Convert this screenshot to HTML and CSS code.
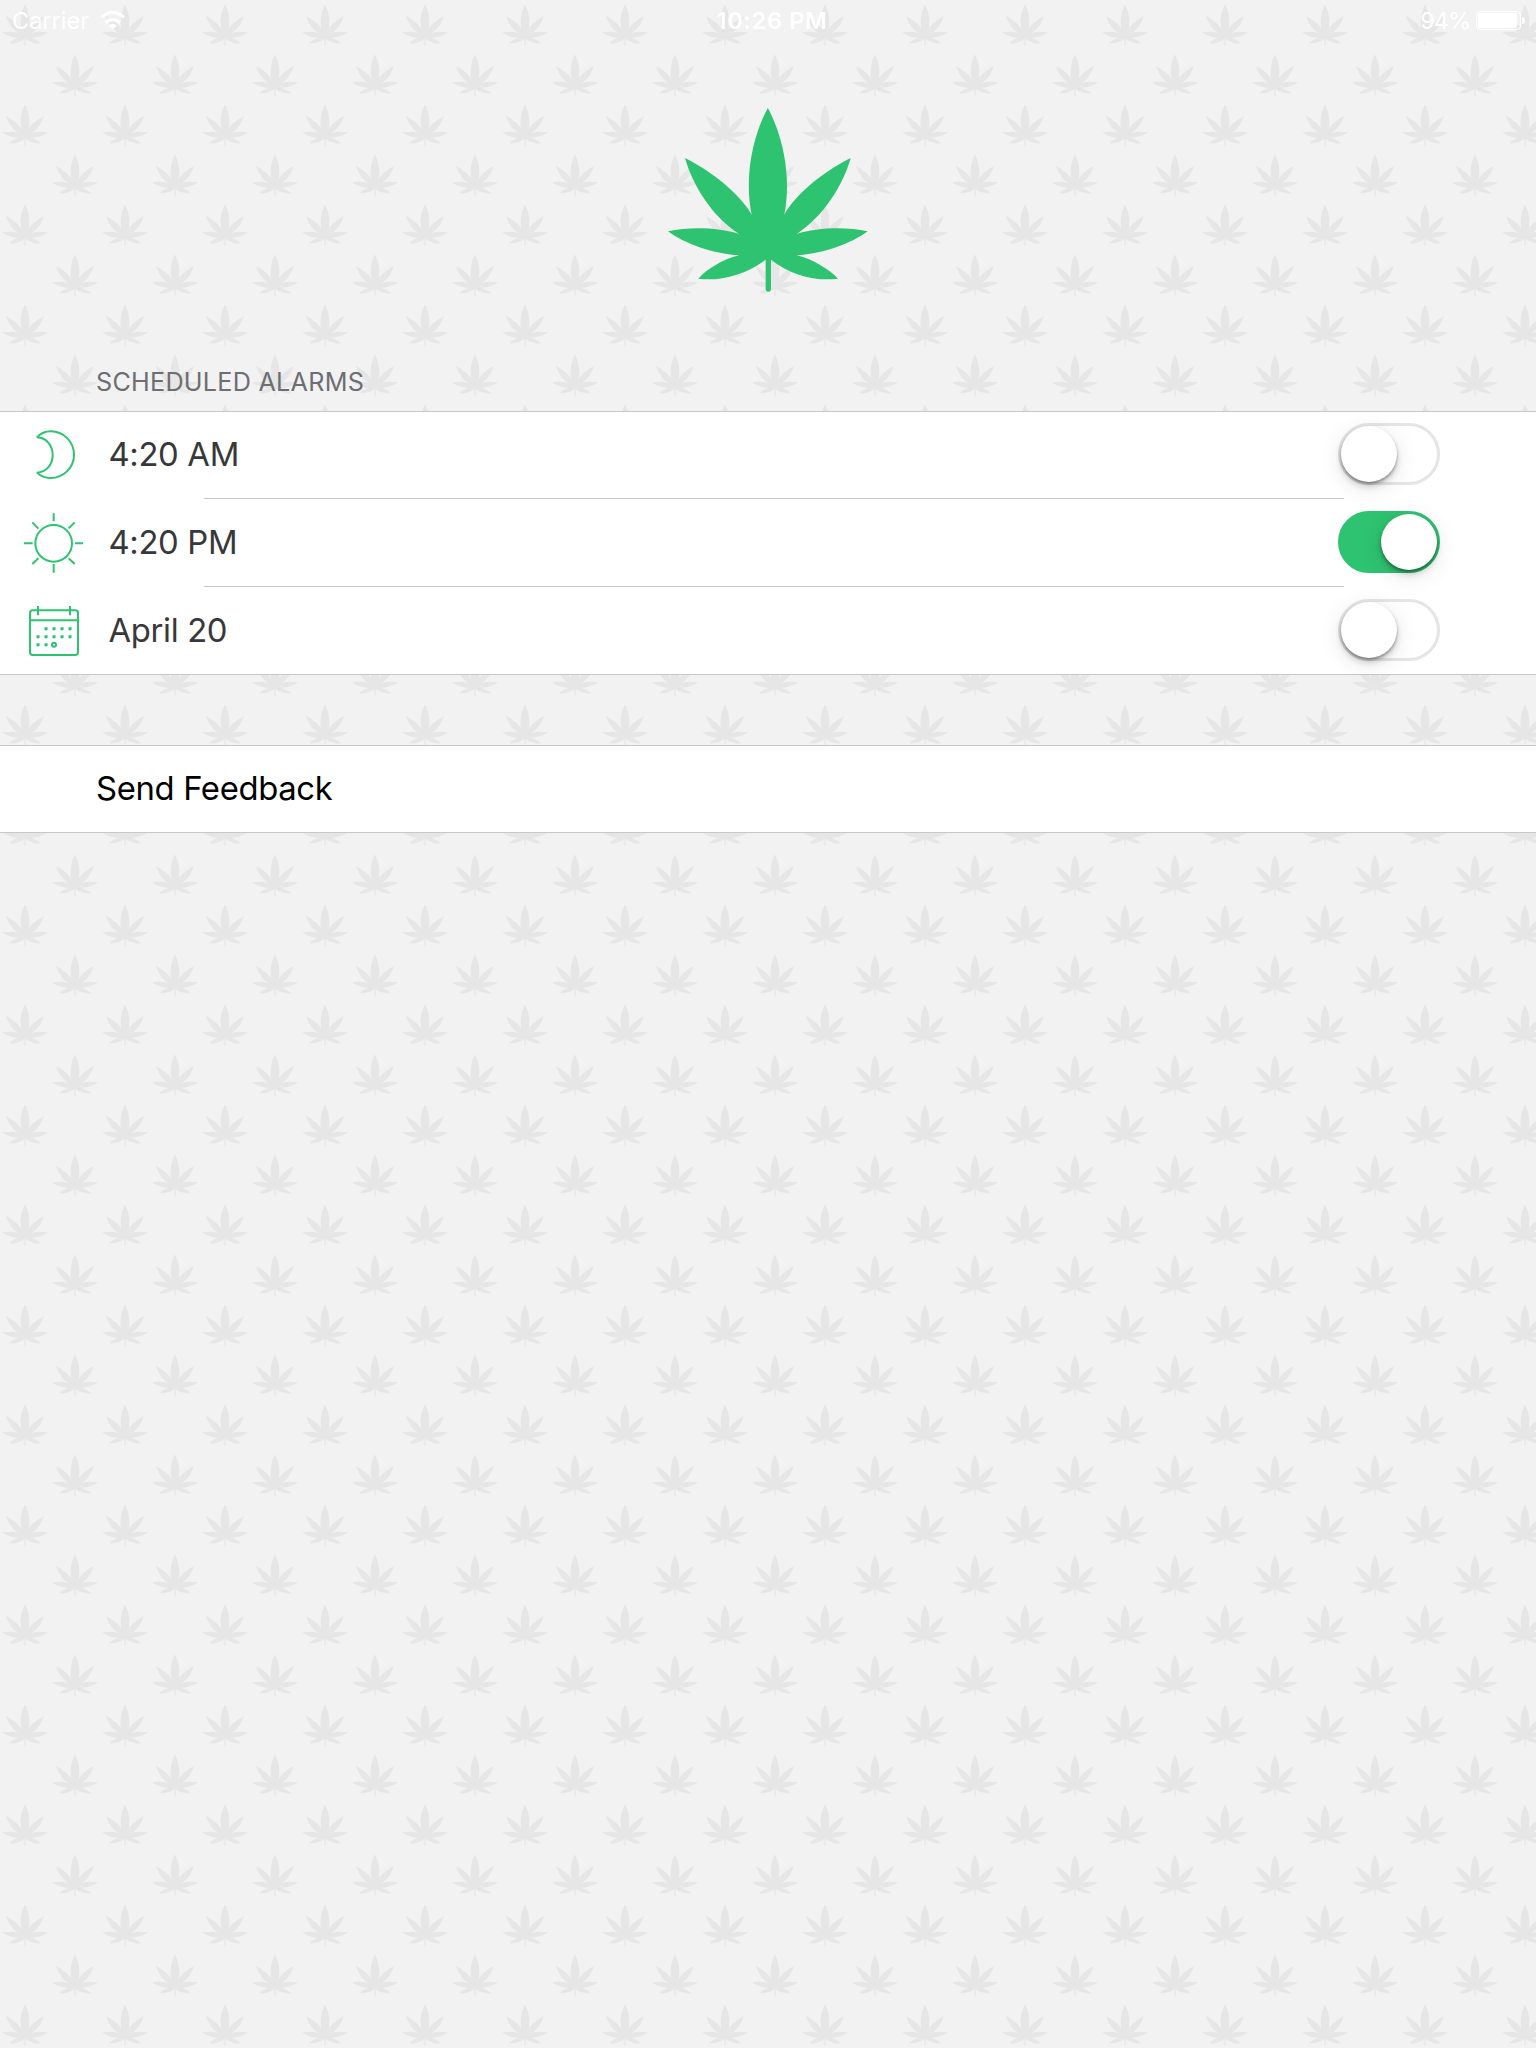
FILE: index.html
```
<!DOCTYPE html>
<html lang="en">
<head>
<meta charset="utf-8">
<title>Alarms</title>
<link rel="stylesheet" href="styles.css">
</head>
<body>
<svg class="backdrop" width="1536" height="2048" aria-hidden="true">
  <defs>
    <path id="leaf" d="M323.5 24C360 90 398 215 373 344C395 300 470 225 572 174C550 255 490 350 410 402C470 382 560 380 623 394C575 430 490 462 410 466C460 478 510 510 534 536C470 545 390 525 333 479V566Q333 575 325 575Q317 575 317 566V479C257 525 177 545 115 536C137 510 187 478 237 466C157 462 72 430 24 394C87 380 177 382 237 402C157 350 97 255 75 174C177 225 252 300 275 344C249 215 287 90 323.5 24Z"/>
    <pattern id="leaves" width="100" height="100" patternUnits="userSpaceOnUse">
      <use href="#leaf" transform="translate(.32 2.8) scale(.0763 .0755)"/>
      <use href="#leaf" transform="translate(50.32 52.8) scale(.0763 .0755)"/>
    </pattern>
  </defs>
  <rect width="1536" height="2048" fill="url(#leaves)"/>
</svg>

<div class="screen">
  <header class="status">
    <div class="status-left">
      <span>Carrier</span>
      <svg class="wifi" viewBox="0 0 76 60">
        <path d="M4 22Q38 -8 72 22M16 38Q38 20 60 38" fill="none" stroke="#fff" stroke-width="9"/>
        <path d="M26 47Q38 35 51 47L38 58Z" fill="#fff"/>
      </svg>
    </div>
    <span class="clock">10:26 PM</span>
    <div class="status-right">
      <span class="percent">94%</span>
      <svg class="battery" viewBox="0 0 50 20">
        <rect x=".5" y=".5" width="44" height="18" rx="3.5" fill="none" stroke="#fff"/>
        <rect x="2" y="2" width="39" height="15" rx="1" fill="#fff"/>
        <path d="M46 6Q49 6 49 9.5T46 13Z" fill="#fff"/>
      </svg>
    </div>
  </header>

  <div class="hero">
    <svg class="logo" viewBox="24 24 600 552"><use href="#leaf"/></svg>
  </div>

  <h2 class="section-title">SCHEDULED ALARMS</h2>
  <section class="group">
    <div class="row alarm">
      <svg class="icon" viewBox="0 0 180 180"><path d="M39 37C50 25 64 19 80 19A70 70 0 0 1 80 159C64 159 50 154 39 143C68 142 86 118 86 90C86 62 68 38 39 37Z"/></svg>
      <span class="label">4:20 AM</span>
      <span class="toggle"><i class="knob"></i></span>
    </div>
    <div class="row alarm">
      <svg class="icon" viewBox="0 0 180 180"><circle cx="89" cy="91" r="55"/><path d="M89 1V25M89 153V179M0 91H26M153 91H177M25 28L43 47M134 46L152 28M25 153L43 136M134 136L152 153"/></svg>
      <span class="label">4:20 PM</span>
      <span class="toggle on"><i class="knob"></i></span>
    </div>
    <div class="row alarm">
      <svg class="icon" viewBox="0 0 180 180">
        <rect x="18" y="28" width="144" height="134" rx="8"/>
        <path d="M17 58H163M42 15V43M138 15V43"/>
        <path class="days" d="M66 83h0M90 83h0M114 83h0M138 83h0M42 107h0M66 107h0M90 107h0M114 107h0M138 107h0M42 131h0M66 131h0"/>
        <circle cx="90" cy="131" r="6"/>
      </svg>
      <span class="label">April 20</span>
      <span class="toggle"><i class="knob"></i></span>
    </div>
  </section>

  <section class="group">
    <div class="row feedback">Send Feedback</div>
  </section>
</div>
</body>
</html>
```
FILE: styles.css
```
* { box-sizing: border-box; }

body {
  margin: 0;
  background: #f2f2f2;
  font-family: Inter, "Liberation Sans", sans-serif;
}

.backdrop {
  position: absolute;
  inset: 0;
  z-index: -1;
  fill: #e6e6e6;
}

.screen {
  width: 1536px;
  height: 2048px;
  overflow: hidden;
}

.status {
  display: grid;
  grid-template-columns: 1fr auto 1fr;
  height: 40px;
  padding: 6px 10px 0 12px;
  color: #fff;
  font-size: 23.5px;
  line-height: 29px;
}

.status-left,
.status-right { display: flex; }

.status-right { justify-content: flex-end; }

.wifi {
  width: 25.3px;
  height: 20px;
  margin: 4px 0 0 11px;
}

.clock {
  padding-left: 6px;
  font-weight: 600;
  letter-spacing: .7px;
}

.percent { letter-spacing: -1px; }

.battery {
  width: 50px;
  height: 20px;
  margin: 5px 0 0 6px;
}

.hero {
  display: flex;
  justify-content: center;
  height: 327px;
  padding-top: 68px;
}

.logo {
  width: 200px;
  height: 184px;
  fill: #2ec370;
}

.section-title {
  margin: 0;
  padding: 0 96px 14px;
  color: #6d6d72;
  font-size: 25.2px;
  font-weight: 400;
  line-height: 30px;
  letter-spacing: .25px;
}

.group {
  margin-bottom: 70px;
  background: #fff;
  box-shadow: inset 0 1px #c8c7cc, inset 0 -1px #c8c7cc;
}

.row {
  display: flex;
  align-items: center;
  height: 88px;
  padding: 0 96px 2px;
  font-size: 32.8px;
  line-height: 40px;
  letter-spacing: -.34px;
}

.alarm { padding-left: 24px; }

.alarm:not(:last-child) {
  background: linear-gradient(#c8c7cc, #c8c7cc) 204px 100% / 1140px 1px no-repeat;
}

.icon {
  width: 60px;
  height: 60px;
  margin-top: 2px;
  overflow: visible;
  fill: none;
  stroke: #2ec370;
  stroke-width: 6;
  stroke-linejoin: bevel;
}

.days {
  stroke-width: 10.5px;
  stroke-linecap: round;
}

.label {
  flex: 1;
  padding-left: 24.5px;
  color: #38383a;
}

.toggle {
  width: 102px;
  height: 62px;
  border: 3px solid #e5e5e5;
  border-radius: 31px;
}

.toggle.on {
  display: flex;
  justify-content: flex-end;
  border-color: #2ec370;
  background: #2ec370;
}

.knob {
  display: block;
  width: 56px;
  height: 56px;
  border-radius: 50%;
  background: #fff;
  box-shadow: 0 5px 24px rgba(0, 0, 0, .1), 0 5px 7px rgba(0, 0, 0, .14), 0 2px 3px rgba(0, 0, 0, .35);
}

.feedback { color: #000; }
```
